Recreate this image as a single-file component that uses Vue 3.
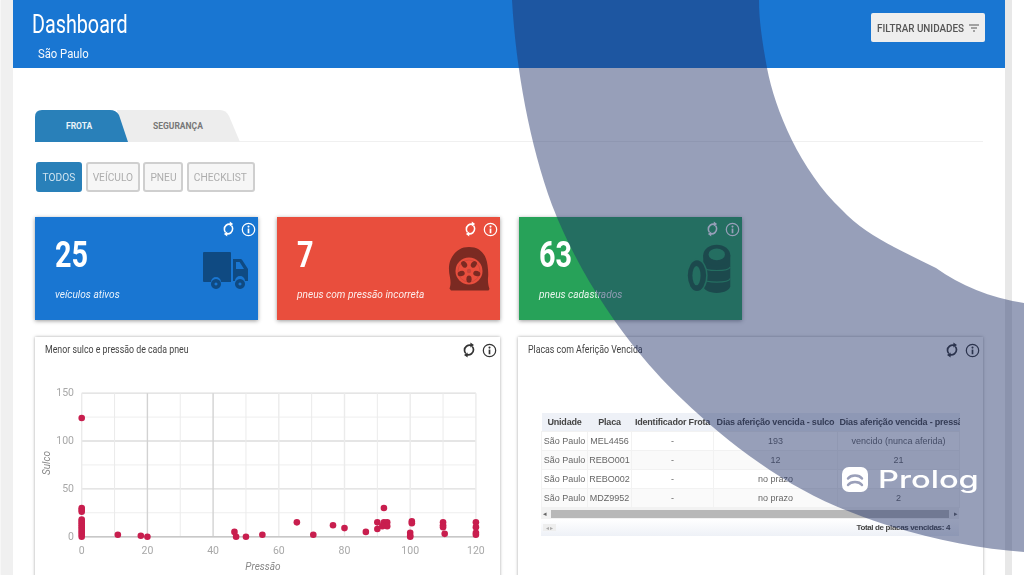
<script setup>
const X0 = 46.7, PX = 3.285, Y0 = 173.7, PY = 0.957
const sx = (v) => X0 + v * PX
const sy = (v) => Y0 - v * PY

const buttons = [
  { label: 'Todos', active: true, width: 46 },
  { label: 'Veículo', width: 54 },
  { label: 'Pneu', width: 40 },
  { label: 'Checklist', width: 68 },
]
const cards = [
  { value: '25', label: 'veículos ativos', tone: 'blue', icon: 'truck' },
  { value: '7', label: 'pneus com pressão incorreta', tone: 'red', icon: 'wheel' },
  { value: '63', label: 'pneus cadastrados', tone: 'green', icon: 'tires' },
]
const verticals = Array.from({ length: 13 }, (_, i) => i * 10)
const horizontals = Array.from({ length: 7 }, (_, i) => i * 25)
const xTicks = [0, 20, 40, 60, 80, 100, 120]
const yTicks = [0, 50, 100, 150]
const holes = [0, 72, 144, 216, 288]
const points = [
  [0,124],[0,30],[0,28],[0,26],[0,18],[0,16],[0,14],[0,12],[0,10],[0,8],[0,6],[0,4],[0,2],[0,0],
  [11,2],[18,1],[20,0],[46.5,5],[47,0],[50,0],[55,2],[65.5,15],[70.5,2],[76.5,12],[80,9],[86.5,5],
  [90,15],[90,8],[92,30],[92,15],[92,12],[93,15],[93,11],[91.5,11],[100.5,16],[100.5,14],[100,4],
  [100,1],[100,0],[110,15],[110,12],[110,10],[110.5,3],[120,15],[120,10],[120,4],[120,2],
]
const rows = [
  ['São Paulo', 'MEL4456', '-', '193', 'vencido (nunca aferida)'],
  ['São Paulo', 'REBO001', '-', '12', '21'],
  ['São Paulo', 'REBO002', '-', 'no prazo', ''],
  ['São Paulo', 'MDZ9952', '-', 'no prazo', '2'],
]
</script>

<template>
  <div class="screen">
    <svg class="defs" width="0" height="0" aria-hidden="true">
      <symbol id="refresh" viewBox="0 0 12 16" preserveAspectRatio="none">
        <path d="M8.400 3.300C4.500 2.500 1.500 5 1.500 8.200c0 1.300.5 2.500 1.300 3.300" fill="none" stroke="currentColor" stroke-width="1.700" />
        <path d="M3.600 12.700c3.900.8 6.900-1.700 6.900-4.900 0-1.300-.5-2.500-1.300-3.300" fill="none" stroke="currentColor" stroke-width="1.700" />
        <path d="M7.400.4 11 3 7.400 5.600ZM4.600 10.400 1 13l3.600 2.600Z" fill="currentColor" />
      </symbol>
      <symbol id="info" viewBox="0 0 16 16">
        <circle cx="8" cy="8" r="6.600" fill="none" stroke="currentColor" stroke-width="1.300" />
        <circle cx="8" cy="4.900" r="1.100" fill="currentColor" />
        <path d="M8 7v5" stroke="currentColor" stroke-width="1.800" />
      </symbol>
    </svg>

    <main class="page">
      <header class="hero">
        <div>
          <h1 class="sq">Dashboard</h1>
          <p class="sq">São Paulo</p>
        </div>
        <button class="filter">
          <span class="sq">FILTRAR UNIDADES</span>
          <svg width="10" height="8" viewBox="0 0 10 8"><path d="M0 1h10M2 4h6M4 7h2" stroke="#555" stroke-width="1.200" /></svg>
        </button>
      </header>

      <section class="content">
        <nav class="tabs">
          <div class="tab tab-second"><span>SEGURANÇA</span></div>
          <div class="tab tab-first"><span>FROTA</span></div>
        </nav>

        <div class="buttons">
          <button
            v-for="b in buttons"
            :key="b.label"
            class="pill"
            :class="{ active: b.active }"
            :style="{ width: b.width + 'px' }"
          ><span class="sq">{{ b.label.toUpperCase() }}</span></button>
        </div>

        <div class="cards">
          <article v-for="c in cards" :key="c.value" class="card" :class="c.tone">
            <div class="tools">
              <svg class="ic-r"><use href="#refresh" /></svg>
              <svg class="ic-i"><use href="#info" /></svg>
            </div>
            <div class="card-body">
              <div>
                <div class="value sq">{{ c.value }}</div>
                <div class="label">{{ c.label }}</div>
              </div>
              <svg v-if="c.icon === 'truck'" class="glyph" viewBox="0 0 46 56" fill="#0f4a82">
                <g transform="translate(0 3)">
                  <path d="M1 12h26a1 1 0 0 1 1 1v29H18a5 5 0 0 0-10 0H1a1 1 0 0 1-1-1V13a1 1 0 0 1 1-1Z" />
                  <path fill-rule="evenodd" d="M30 19h7.500a2 2 0 0 1 1.700.9l5.800 9.100v12h-3a5 5 0 0 0-10 0h-2ZM33 22v7h8l-4.400-7Z" />
                  <path fill-rule="evenodd" d="M13 39a5 5 0 1 0 .01 0ZM13 42.500a1.500 1.500 0 1 1-.01 0ZM37 39a5 5 0 1 0 .01 0ZM37 42.500a1.500 1.500 0 1 1-.01 0Z" />
                </g>
              </svg>
              <svg v-else-if="c.icon === 'wheel'" class="glyph" viewBox="0 0 46 56">
                <g transform="translate(0 3)">
                  <path fill="#7b2a22" d="M24 7C35 7 41 14 42.500 25c.6 5 1 9 .5 13-.3 4 .5 8 1.500 11l-1 1.500H6l-1.500-2c1-3 1.500-6 .5-11C3.500 31 3.500 25 5.500 20 9 12 15 7 24 7Z" />
                  <circle cx="24" cy="31" r="13.500" fill="#e94e3d" />
                  <circle cx="24" cy="31" r="11" fill="none" stroke="#c9453a" stroke-width=".8" />
                  <ellipse
                    v-for="a in holes"
                    :key="a"
                    cx="24"
                    cy="22.800"
                    rx="2.600"
                    ry="3.600"
                    fill="#7b2a22"
                    :transform="`rotate(${a + 36} 24 31)`"
                  />
                  <circle cx="24" cy="31" r="2.200" fill="#c9453a" />
                </g>
              </svg>
              <svg v-else class="glyph" viewBox="0 0 46 58" fill="#175e34">
                <g transform="translate(-1 2)">
                  <path d="M17 17h28v32c0 3-6 7-14 7s-14-4-14-7Z" />
                  <path d="M17 29c2 5 26 5 28 0M17 41c2 5 26 5 28 0" fill="none" stroke="#27a259" stroke-width="1.100" />
                  <ellipse cx="31" cy="17" rx="14" ry="11" />
                  <ellipse cx="31" cy="16" rx="8.500" ry="6" fill="#27a259" />
                  <ellipse cx="10.500" cy="38" rx="11" ry="17.500" fill="#27a259" />
                  <ellipse cx="10.500" cy="38" rx="9.500" ry="16" />
                  <ellipse cx="10" cy="38" rx="4.200" ry="10" fill="#27a259" />
                </g>
              </svg>
            </div>
          </article>
        </div>

        <div class="panels">
          <article class="panel">
            <div class="panel-head">
              <h2 class="sq title-a">Menor sulco e pressão de cada pneu</h2>
              <div class="tools dark">
                <svg class="ic-r"><use href="#refresh" /></svg>
                <svg class="ic-i"><use href="#info" /></svg>
              </div>
            </div>
            <svg class="chart" width="465" height="213" viewBox="0 0 465 213">
              <line v-for="v in horizontals" :key="'h' + v" :x1="X0" :x2="sx(120)" :y1="sy(v)" :y2="sy(v)" :stroke="v % 50 === 0 ? '#dddddd' : '#eeeeee'" :stroke-width="v % 50 === 0 ? 1.4 : 1" />
              <line v-for="v in verticals" :key="'v' + v" :x1="sx(v)" :x2="sx(v)" :y1="sy(150)" :y2="sy(0)" :stroke="v === 20 || v === 40 ? '#d2d2d2' : '#ebebeb'" :stroke-width="v % 20 === 0 ? 1.4 : 1" />
              <line :x1="X0" :x2="sx(120)" :y1="Y0" :y2="Y0" stroke="#c8c8c8" stroke-width="1.400" />
              <circle v-for="(p, i) in points" :key="i" :cx="sx(p[0])" :cy="sy(p[1])" r="3.300" fill="#c81e4e" />
              <text v-for="t in yTicks" :key="'yt' + t" x="39" :y="sy(t) + 3" text-anchor="end" class="tick">{{ t }}</text>
              <text v-for="t in xTicks" :key="'xt' + t" :x="sx(t)" y="191" text-anchor="middle" class="tick">{{ t }}</text>
              <text x="228" y="207" text-anchor="middle" class="axis">Pressão</text>
              <text x="0" y="0" text-anchor="middle" class="axis" transform="translate(15 100) rotate(-90)">Sulco</text>
            </svg>
          </article>

          <article class="panel">
            <div class="panel-head">
              <h2 class="sq">Placas com Aferição Vencida</h2>
              <div class="tools dark">
                <svg class="ic-r"><use href="#refresh" /></svg>
                <svg class="ic-i"><use href="#info" /></svg>
              </div>
            </div>
            <div class="grid">
              <table>
                <colgroup>
                  <col class="c1" /><col class="c2" /><col class="c3" /><col class="c4" /><col class="c5" />
                </colgroup>
                <thead>
                  <tr>
                    <th>Unidade</th><th>Placa</th><th>Identificador Frota</th><th>Dias aferição vencida - sulco</th><th class="last">Dias aferição vencida - pressão</th>
                  </tr>
                </thead>
                <tbody>
                  <tr v-for="r in rows" :key="r[1]">
                    <td v-for="(cell, i) in r" :key="i">{{ cell }}</td>
                  </tr>
                </tbody>
              </table>
              <div class="scroll"><span class="arrow">◂</span><i class="thumb"></i><span class="arrow">▸</span></div>
              <div class="grid-foot"><span class="pager">◂ ▸</span><b>Total de placas vencidas: 4</b></div>
            </div>
          </article>
        </div>
      </section>
    </main>

    <svg class="swoosh" width="1024" height="585" viewBox="0 0 1024 585">
      <path d="M512 0C516 70 530 145 552 205 585 290 640 360 683 400 730 445 790 490 853 513 910 535 970 548 1024 552V303C990 298 960 285 936 268 900 250 865 235 842 210 800 170 775 110 767 68 762 40 759 20 759 0Z" fill="rgb(35 50 107 / .47)" />
    </svg>

    <div class="brand">
      <svg width="26" height="25" viewBox="0 0 26 25">
        <rect width="26" height="25" rx="7" fill="#fff" />
        <path d="M6 11.500C9 7.500 17 7.500 20 11.500M6 18C9 14 17 14 20 18" fill="none" stroke="#9a9fb9" stroke-width="2.400" stroke-linecap="round" />
      </svg>
      <span>Prolog</span>
    </div>
  </div>
</template>

<style>
html, body { margin: 0; background: #fff; }
</style>

<style scoped>
.screen {
  position: relative;
  width: 1024px;
  height: 575px;
  overflow: hidden;
  font-family: Roboto, "Liberation Sans", sans-serif;
}
.defs { position: absolute; }
.page {
  width: 992.5px;
  height: 575px;
  margin-left: 12.5px;
  background: #fff;
  box-shadow: -12.5px 0 0 #f0f0f0, 7px 0 0 #e8e8e8;
  filter: blur(.7px);
}
.sq { display: inline-block; transform-origin: left center; }

.hero {
  height: 68px;
  box-sizing: border-box;
  padding: 10px 20px 0 19.5px;
  background: #1976d2;
  color: #fff;
  display: flex;
  justify-content: space-between;
  align-items: flex-start;
}
.hero h1 { display: block; margin: 0; font-size: 25px; line-height: 29px; font-weight: 400; transform: scaleX(.79); }
.hero p { display: block; margin: 7px 0 0 6px; font-size: 13px; line-height: 16px; transform: scaleX(.87); opacity: .95; }
.filter {
  width: 114px;
  height: 29px;
  margin-top: 3px;
  padding: 0 6px;
  display: flex;
  align-items: center;
  border: 0;
  border-radius: 2px;
  background: #eeeeee;
  color: #555;
  font: 500 11.5px Roboto, sans-serif;
  white-space: nowrap;
}
.filter span { width: 92px; transform: scaleX(.86); }

.content { padding: 42px 22.5px 0 22.5px; }
.tabs { display: flex; height: 32px; box-sizing: border-box; border-bottom: 1px solid #f0f0f0; position: relative; }
.tab {
  position: absolute;
  top: 0;
  height: 32px;
  display: flex;
  align-items: center;
  font-size: 8.5px;
  font-weight: 700;
}
.tab-first {
  left: 0; width: 93px;
  background: #2980b9;
  color: #e8f2f8;
  padding-left: 31px;
  box-sizing: border-box;
  clip-path: path("M0 32V7Q0 0 7 0H75Q81 0 84 5L93 32Z");
}
.tab-second {
  left: 82px; width: 123px;
  background: #ededed;
  color: #777;
  padding-left: 36px;
  box-sizing: border-box;
  clip-path: path("M9 32 0 0H103Q109 0 112 6L123 32Z");
}
.buttons { display: flex; gap: 3.5px; margin: 20px 0 0 1px; height: 30px; }
.pill {
  box-sizing: border-box;
  height: 30px;
  padding: 0;
  border: 2px solid #cfcfcf;
  border-radius: 3px;
  background: #f6f6f6;
  color: #adadad;
  font: 400 10.5px Roboto, sans-serif;
  display: flex;
  justify-content: center;
  align-items: center;
  white-space: nowrap;
}
.pill span { transform: scaleX(.97); transform-origin: center; }
.pill.active { background: #2980b9; border-color: #2980b9; color: #cfe3f0; }

.cards { display: grid; grid-template-columns: repeat(3, 223px); column-gap: 19px; margin-top: 25px; }
.card {
  height: 103px;
  box-sizing: border-box;
  padding: 4px 9px 0 20px;
  color: #fff;
  box-shadow: 0 1px 4px rgba(0, 0, 0, .4);
}
.blue { background: #1976d2; }
.red { background: #e94e3d; }
.green { background: #27a259; }
.tools { display: flex; justify-content: flex-end; align-items: center; gap: 7px; height: 16px; margin-right: -7px; }
.tools.dark { color: #333; margin-right: -6px; }
.ic-r { width: 11px; height: 16px; }
.ic-i { width: 15px; height: 15px; }
.dark .ic-r { width: 12px; }
.card-body { display: flex; justify-content: space-between; height: 80px; }
.value { font-size: 36px; line-height: 36px; font-weight: 700; transform: scaleX(.8); }
.label { margin-top: 15px; font-size: 11px; line-height: 14px; font-style: italic; opacity: .9; white-space: nowrap; transform: scaleX(.92); transform-origin: left center; }
.glyph { width: 46px; height: 56px; flex: none; }

.panels { display: grid; grid-template-columns: repeat(2, 465px); column-gap: 18px; margin-top: 17px; }
.panel {
  height: 260px;
  box-sizing: border-box;
  background: #fff;
  box-shadow: 0 0 3px rgba(0, 0, 0, .35);
}
.panel-head {
  height: 26px;
  box-sizing: border-box;
  padding: 5px 9px 0 10px;
  display: flex;
  justify-content: space-between;
  align-items: flex-start;
}
.panel-head h2 { margin: 0; font-size: 11px; line-height: 16px; font-weight: 400; color: #444; transform: scaleX(.8); white-space: nowrap; }
.chart { display: block; }
.tick { font: 10.5px Roboto, sans-serif; fill: #a8a8a8; }
.axis { font: italic 10px Roboto, sans-serif; fill: #888; }

.grid { margin: 50px 0 0 23px; width: 418px; font-family: "Liberation Sans", sans-serif; }
table { width: 418px; table-layout: fixed; border-collapse: collapse; font-size: 9px; color: #666; }
.c1 { width: 46px; }
.c2 { width: 44px; }
.c3 { width: 82px; }
.c4 { width: 124px; }
.c5 { width: 122px; }
th {
  height: 18px;
  padding: 0;
  background: #eef1f7;
  color: #444;
  font-weight: 700;
  letter-spacing: -.2px;
  white-space: nowrap;
  overflow: hidden;
}
th.last { text-align: left; padding-left: 2px; }
td {
  height: 18px;
  padding: 0;
  text-align: center;
  border: 1px solid #f2f2f2;
  white-space: nowrap;
  overflow: hidden;
}
tbody tr:nth-child(even) td { background: #fafafa; }
.scroll { height: 11px; display: flex; align-items: center; gap: 3px; background: #f2f2f2; font-size: 7px; color: #666; }
.thumb { flex: 1; height: 8px; background: #b8b8b8; }
.arrow { width: 7px; text-align: center; }
.grid-foot {
  height: 17px;
  padding: 0 9px 0 2px;
  display: flex;
  justify-content: space-between;
  align-items: center;
  background: linear-gradient(#fff, #eef1f7);
  font-size: 8px;
  letter-spacing: -.35px;
  color: #444;
}
.pager { color: #aaa; background: #eee; padding: 0 3px; font-size: 6px; }

.swoosh { position: absolute; left: 0; top: 0; pointer-events: none; filter: blur(.3px); }
.brand {
  position: absolute;
  left: 842px;
  top: 467px;
  display: flex;
  align-items: flex-start;
  gap: 10px;
  color: #fff;
  filter: blur(.3px);
}
.brand span {
  display: block;
  font: 500 24px/26px Inter, sans-serif;
  transform: scaleX(1.36);
  transform-origin: left center;
}
</style>
